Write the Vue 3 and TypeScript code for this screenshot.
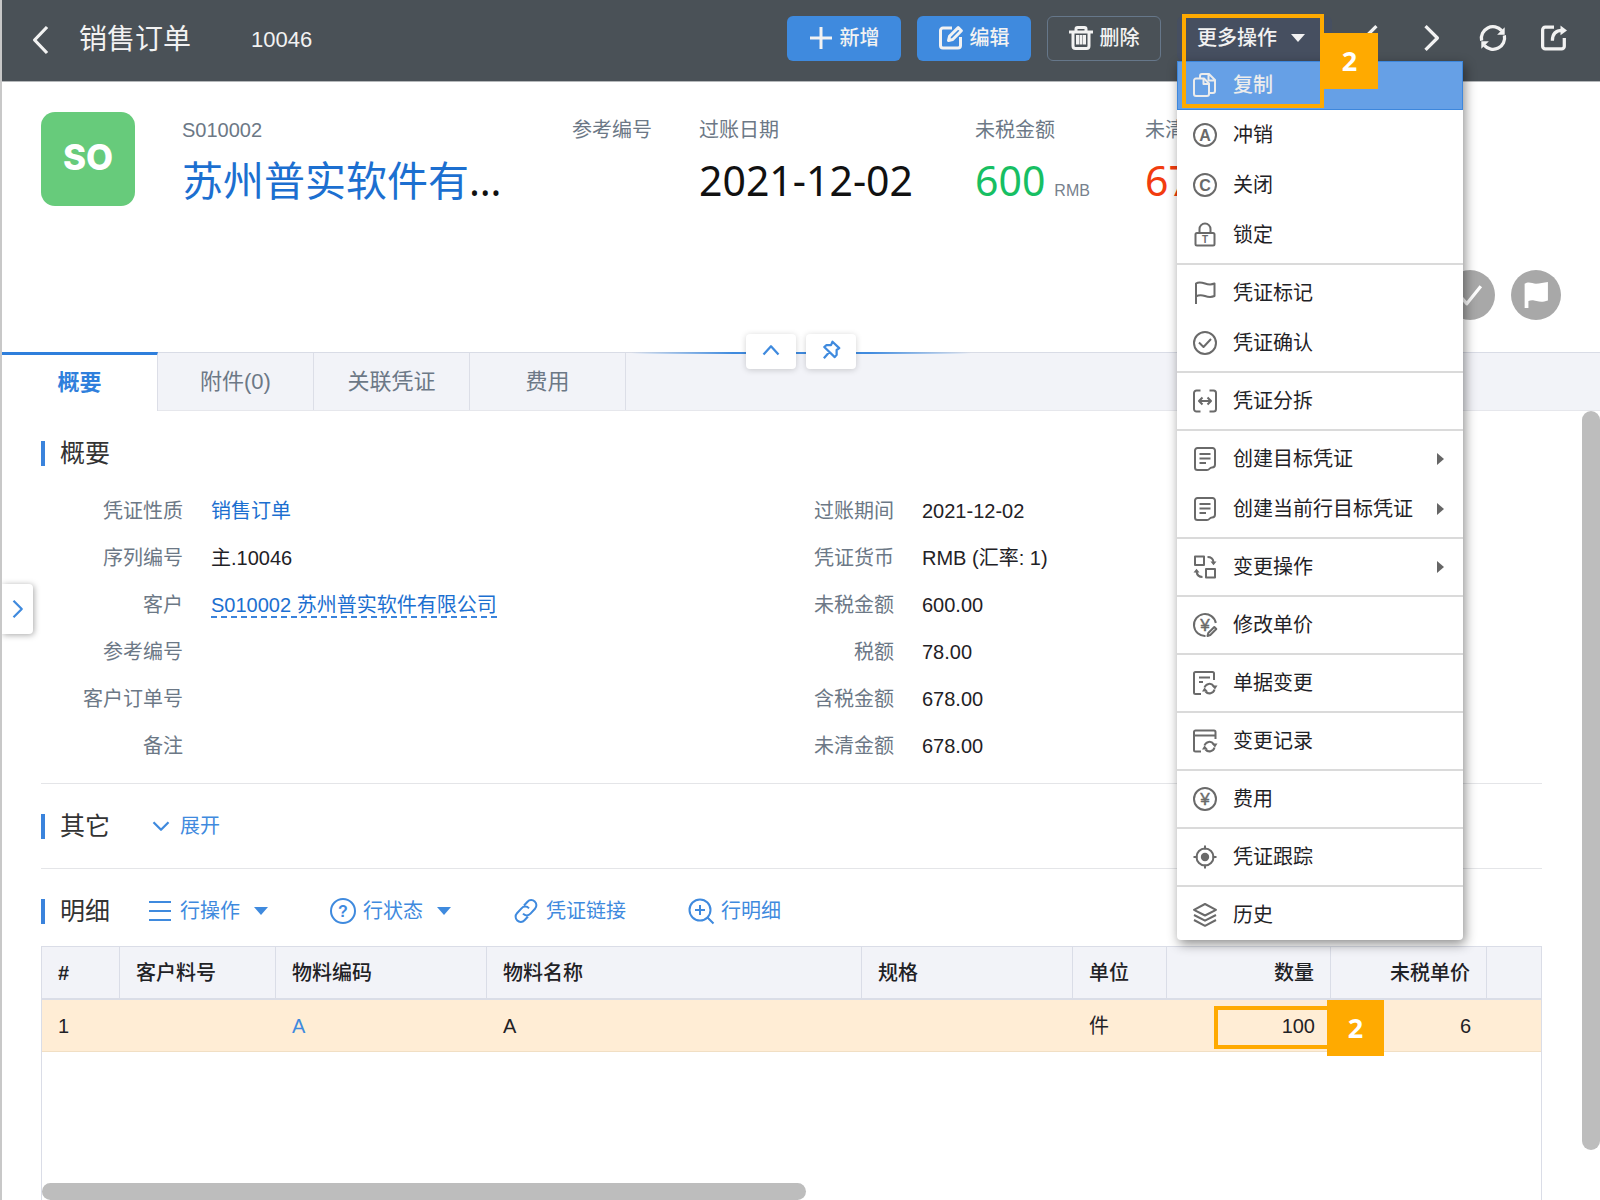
<script setup lang="ts">
import { ref } from 'vue'

interface MenuItem {
  icon: string
  label: string
  submenu?: boolean
}

interface Field {
  label: string
  value: string
  kind?: 'link' | 'dashed'
}

interface Column {
  title: string
  width: number
  value: string
  numeric?: boolean
  link?: boolean
  marked?: boolean
}

const refreshArcs =
  '<path d="M11.500 16.500a5.200 5.200 0 0 1 9.200-1.500M21.500 18.500a5.200 5.200 0 0 1-9 2"/><path fill="currentColor" stroke="none" d="M18.500 14.500h6l-2.500 4zM9 20.500h6l-3.500-4z"/>'

const icons: Record<string, string> = {
  back: '<path d="M18.500 0 7 12l11.500 12"/>',
  prev: '<path d="M17 1 6 12l11 11"/>',
  next: '<path d="m6 1 11 11L6 23"/>',
  plus: '<path d="M12 1v22M1 12h22"/>',
  edit: '<path d="M13 2H4a2.500 2.500 0 0 0-2.500 2.500v15A2.500 2.500 0 0 0 4 22h15a2.500 2.500 0 0 0 2.500-2.500V11"/><path d="m9.500 14.500 1-4.200 8.700-8.700 3.200 3.200-8.700 8.700z"/>',
  trash: '<path d="M0 6h24M7 5.500V3a1.500 1.500 0 0 1 1.500-1.500h7A1.500 1.500 0 0 1 17 3v2.500M4 6v14a2.500 2.500 0 0 0 2.500 2.500h11A2.500 2.500 0 0 0 20 20V6M8.500 9V18.500M12 9V18.500M15.500 9V18.500"/>',
  refresh: '<path d="M1.500 14.500A10.700 10.700 0 0 1 20 5.200M22.500 9.500A10.700 10.700 0 0 1 4 18.800"/><path fill="currentColor" stroke="none" d="M22.800 2v7h-7zM1.200 22v-7h7z"/>',
  share: '<path d="M12 2H4a2.500 2.500 0 0 0-2.500 2.500v15A2.500 2.500 0 0 0 4 22h15a2.500 2.500 0 0 0 2.500-2.500V12M10.500 14.500c0-6 3-9.500 9-9.500"/><path fill="currentColor" stroke="none" d="M18 .5 24 5l-6 4.500z"/>',
  copy: '<path d="M3 5.500h8l5 5V21a2 2 0 0 1-2 2H3a2 2 0 0 1-2-2V7.500a2 2 0 0 1 2-2z"/><path d="M10.500 6v5H16M7 5V3a2 2 0 0 1 2-2h7l6 6v11a2 2 0 0 1-2 2h-3.500M15.500 1.500V7.500H22"/>',
  circleA: '<circle cx="12" cy="12" r="11"/><text x="12" y="17.500" text-anchor="middle" font-size="16" font-weight="700" fill="currentColor" stroke="none">A</text>',
  circleC: '<circle cx="12" cy="12" r="11"/><text x="12" y="17.500" text-anchor="middle" font-size="16" font-weight="700" fill="currentColor" stroke="none">C</text>',
  lock: '<rect x="2.500" y="10" width="19" height="12.500" rx="1.500"/><path d="M6.500 10V6a5.500 5.500 0 0 1 11 0v4"/><text x="12" y="20" text-anchor="middle" font-size="10" font-weight="700" fill="currentColor" stroke="none">T</text>',
  flag: '<path d="M3 23V2.500c3-2 6-1 9 0s6 1.500 9.500 0v12.500c-3.500 1.500-6.500 1-9.500 0s-6-1.500-9 .5"/>',
  check: '<circle cx="12" cy="12" r="11"/><path d="m6 11.500 4.500 4.500 7.500-8"/>',
  split: '<path d="M7.500 1.500H3.500A2.500 2.500 0 0 0 1 4v16a2.500 2.500 0 0 0 2.500 2.500h4M16.500 1.500h4A2.500 2.500 0 0 1 23 4v16a2.500 2.500 0 0 1-2.500 2.500h-4M6 12h12M9.500 8.500 6 12l3.500 3.500M14.500 8.500 18 12l-3.500 3.500"/>',
  doc: '<path d="M4.500 1h15a2.500 2.500 0 0 1 2.500 2.500v14a3 3 0 0 1-3 3c-3 0-2 2.500-5 2.500H4.500A2.500 2.500 0 0 1 2 20.500v-17A2.500 2.500 0 0 1 4.500 1zM6.500 7h11M6.500 11.500h11M6.500 16h6.500"/>',
  swap: '<rect x="2" y="1.500" width="9" height="8.500"/><rect x="13" y="14" width="9" height="8.500"/><path d="M14.500 2c3 0 5.500 1.500 6 5M9.500 22c-3.500 0-5.500-2-6-5.500"/><path fill="currentColor" stroke="none" d="M17.500 6.500h6l-3 3.800zM.5 17.500h6l-3-3.800z"/>',
  price: '<path d="M12.500 23A11 11 0 1 1 22.800 10"/><text x="12" y="17.500" text-anchor="middle" font-size="17" fill="currentColor" stroke="currentColor" stroke-width=".5">¥</text><path d="m14.500 23 .8-3 6-6 2 2-6 6z"/>',
  docChange: '<path d="M8 23H2.500A1.500 1.500 0 0 1 1 21.500v-19A1.500 1.500 0 0 1 2.500 1h17A1.500 1.500 0 0 1 21 2.500V9M6 6.500h11M6 11h4"/>' + refreshArcs,
  history: '<path d="M8 22.500H2.500A1.500 1.500 0 0 1 1 21V3a1.500 1.500 0 0 1 1.500-1.500h18.500A1.500 1.500 0 0 1 22.500 3v7M1 6.500h21.500"/>' + refreshArcs,
  yen: '<circle cx="12" cy="12" r="11"/><text x="12" y="18" text-anchor="middle" font-size="17" fill="currentColor" stroke="currentColor" stroke-width=".5">¥</text>',
  target: '<circle cx="12" cy="12" r="8.500"/><circle cx="12" cy="12" r="4.200" fill="currentColor" stroke="none"/><path d="M12 .5v4M12 19.500v4M.5 12h4M19.500 12h4"/>',
  layers: '<path d="m12 1 11 5.800-11 5.700L1 6.800zM1 12l11 5.700L23 12M1 17l11 5.800L23 17"/>',
  up: '<path d="m2 18 10-11 10 11"/>',
  down: '<path d="m2 7 10 10L22 7"/>',
  pin: '<path d="m14 1 9 8.500-3.500 2.500v6.500l-2.500 3L3 8l3-2.500h6zM9.500 15l-7 8"/>',
  list: '<path d="M1 3h22M1 12h22M1 21h22"/>',
  help: '<circle cx="12" cy="12" r="12"/><text x="12" y="17.500" text-anchor="middle" font-size="16" font-weight="700" fill="currentColor" stroke="none">?</text>',
  link: '<path d="m10 6.500 3.500-3.800a5 5 0 0 1 7.500 7l-4.500 5a5 5 0 0 1-7.500 0M14 17.500l-3.500 3.800a5 5 0 0 1-7.500-7l4.500-5a5 5 0 0 1 7.500 0"/>',
  zoomIn: '<circle cx="11" cy="11" r="10.500"/><path d="m18.500 18.500 6 6M11 6v10M6 11h10"/>',
  solidFlag: '<path fill="currentColor" d="M1.500 1.500c4-2.500 7 0 10.500 0s7-1 11-1.500v17c-4.500 1.500-7 1.500-10.500.5s-5-1-7.500 0V24h-3.500z" stroke="none"/>',
  solidCheck: '<path d="m2 12 7 8L22 4"/>',
}

const menuGroups: MenuItem[][] = [
  [
    { icon: 'copy', label: '复制' },
    { icon: 'circleA', label: '冲销' },
    { icon: 'circleC', label: '关闭' },
    { icon: 'lock', label: '锁定' },
  ],
  [
    { icon: 'flag', label: '凭证标记' },
    { icon: 'check', label: '凭证确认' },
  ],
  [{ icon: 'split', label: '凭证分拆' }],
  [
    { icon: 'doc', label: '创建目标凭证', submenu: true },
    { icon: 'doc', label: '创建当前行目标凭证', submenu: true },
  ],
  [{ icon: 'swap', label: '变更操作', submenu: true }],
  [{ icon: 'price', label: '修改单价' }],
  [{ icon: 'docChange', label: '单据变更' }],
  [{ icon: 'history', label: '变更记录' }],
  [{ icon: 'yen', label: '费用' }],
  [{ icon: 'target', label: '凭证跟踪' }],
  [{ icon: 'layers', label: '历史' }],
]

const tabs = ['概要', '附件(0)', '关联凭证', '费用']
const activeTab = ref('概要')
const highlighted = ref('复制')

const fieldColumns: Field[][] = [
  [
    { label: '凭证性质', value: '销售订单', kind: 'link' },
    { label: '序列编号', value: '主.10046' },
    { label: '客户', value: 'S010002 苏州普实软件有限公司', kind: 'dashed' },
    { label: '参考编号', value: '' },
    { label: '客户订单号', value: '' },
    { label: '备注', value: '' },
  ],
  [
    { label: '过账期间', value: '2021-12-02' },
    { label: '凭证货币', value: 'RMB (汇率: 1)' },
    { label: '未税金额', value: '600.00' },
    { label: '税额', value: '78.00' },
    { label: '含税金额', value: '678.00' },
    { label: '未清金额', value: '678.00' },
  ],
]

const rowTools = [
  { icon: 'list', label: '行操作', caret: true },
  { icon: 'help', label: '行状态', caret: true },
  { icon: 'link', label: '凭证链接', caret: false },
  { icon: 'zoomIn', label: '行明细', caret: false },
]

const columns: Column[] = [
  { title: '#', width: 78, value: '1' },
  { title: '客户料号', width: 156, value: '' },
  { title: '物料编码', width: 211, value: 'A', link: true },
  { title: '物料名称', width: 375, value: 'A' },
  { title: '规格', width: 211, value: '' },
  { title: '单位', width: 94, value: '件' },
  { title: '数量', width: 164, value: '100', numeric: true, marked: true },
  { title: '未税单价', width: 156, value: '6', numeric: true },
]
</script>

<template>
  <div class="page">
    <header class="topbar">
      <button class="icon-btn back" type="button" aria-label="返回">
        <svg viewBox="0 0 24 24" v-html="icons.back" />
      </button>
      <h1>销售订单</h1>
      <span class="doc-no">10046</span>
      <div class="actions">
        <button class="btn primary" type="button"><svg viewBox="0 0 24 24" v-html="icons.plus" />新增</button>
        <button class="btn primary" type="button"><svg viewBox="0 0 24 24" v-html="icons.edit" />编辑</button>
        <button class="btn outline" type="button"><svg viewBox="0 0 24 24" v-html="icons.trash" />删除</button>
        <div class="more">
          <button class="more-btn" type="button" aria-haspopup="menu">更多操作<i class="caret" /></button>
          <div class="menu" role="menu">
            <div v-for="(group, g) in menuGroups" :key="g" class="menu-group">
              <button
                v-for="item in group"
                :key="item.label"
                type="button"
                role="menuitem"
                class="menu-item"
                :class="{ current: item.label === highlighted }"
              >
                <svg viewBox="0 0 24 24" v-html="icons[item.icon]" />
                <span>{{ item.label }}</span>
                <i v-if="item.submenu" class="arrow" />
              </button>
            </div>
          </div>
          <div class="frame menu-frame" />
          <div class="badge menu-badge">2</div>
        </div>
      </div>
      <nav class="pager">
        <button class="icon-btn" type="button" aria-label="上一条"><svg viewBox="0 0 24 24" v-html="icons.prev" /></button>
        <button class="icon-btn" type="button" aria-label="下一条"><svg viewBox="0 0 24 24" v-html="icons.next" /></button>
        <button class="icon-btn" type="button" aria-label="刷新"><svg viewBox="0 0 24 24" v-html="icons.refresh" /></button>
        <button class="icon-btn" type="button" aria-label="打开"><svg viewBox="0 0 24 24" v-html="icons.share" /></button>
      </nav>
    </header>

    <section class="summary">
      <div class="facts">
        <div class="logo">SO</div>
        <div class="fact customer">
          <span class="cap">S010002</span>
          <div class="big"><a href="#">苏州普实软件有限公司</a></div>
        </div>
        <div class="fact"><span class="cap">参考编号</span></div>
        <div class="fact date">
          <span class="cap">过账日期</span>
          <div class="big">2021-12-02</div>
        </div>
        <div class="fact amount">
          <span class="cap">未税金额</span>
          <div class="big green">600<small>RMB</small></div>
        </div>
        <div class="fact amount">
          <span class="cap">未清金额</span>
          <div class="big red">678<small>RMB</small></div>
        </div>
      </div>
      <div class="states">
        <span class="state"><svg viewBox="0 0 24 24" v-html="icons.solidCheck" /></span>
        <span class="state"><svg viewBox="0 0 24 24" v-html="icons.solidFlag" /></span>
      </div>
    </section>

    <div class="tabbar" role="tablist">
      <button
        v-for="tab in tabs"
        :key="tab"
        class="tab"
        :class="{ active: tab === activeTab }"
        type="button"
        role="tab"
        @click="activeTab = tab"
      >
        {{ tab }}
      </button>
      <div class="fold">
        <button type="button" aria-label="收起"><svg viewBox="0 0 24 24" v-html="icons.up" /></button>
        <button type="button" aria-label="固定"><svg viewBox="0 0 24 24" v-html="icons.pin" /></button>
      </div>
    </div>

    <main class="content">
      <div class="body">
        <section class="overview">
          <div class="head"><h2>概要</h2></div>
          <div class="fields">
            <dl v-for="(column, c) in fieldColumns" :key="c">
              <div v-for="field in column" :key="field.label" class="field">
                <dt>{{ field.label }}</dt>
                <dd>
                  <a v-if="field.kind" href="#" :class="field.kind">{{ field.value }}</a>
                  <template v-else>{{ field.value }}</template>
                </dd>
              </div>
            </dl>
          </div>
        </section>

        <section class="other">
          <div class="head">
            <h2>其它</h2>
            <button class="tool expand" type="button"><svg viewBox="0 0 24 24" v-html="icons.down" />展开</button>
          </div>
        </section>

        <section class="detail">
          <div class="head">
            <h2>明细</h2>
            <div class="tools">
              <button v-for="tool in rowTools" :key="tool.label" class="tool" type="button">
                <svg viewBox="0 0 24 24" v-html="icons[tool.icon]" />{{ tool.label }}<i v-if="tool.caret" class="caret" />
              </button>
            </div>
          </div>
          <div class="grid">
            <table>
              <colgroup>
                <col v-for="col in columns" :key="col.title" :style="{ width: col.width + 'px' }" />
                <col />
              </colgroup>
              <thead>
                <tr>
                  <th v-for="col in columns" :key="col.title" :class="{ num: col.numeric }">{{ col.title }}</th>
                  <th />
                </tr>
              </thead>
              <tbody>
                <tr>
                  <td v-for="col in columns" :key="col.title" :class="{ num: col.numeric, marked: col.marked }">
                    <a v-if="col.link" href="#">{{ col.value }}</a>
                    <template v-else>{{ col.value }}</template>
                    <template v-if="col.marked">
                      <div class="frame cell-frame" />
                      <div class="badge cell-badge">2</div>
                    </template>
                  </td>
                  <td />
                </tr>
              </tbody>
            </table>
            <div class="h-scroll" />
          </div>
        </section>
      </div>
      <div class="v-scroll" />
      <button class="side-handle" type="button" aria-label="展开侧栏">
        <svg viewBox="0 0 24 24" v-html="icons.next" />
      </button>
    </main>
  </div>
</template>

<style>
body {
  margin: 0;
}
</style>

<style scoped>
* {
  box-sizing: border-box;
}

.page {
  display: flex;
  flex-direction: column;
  height: 100vh;
  overflow: hidden;
  border-left: 2px solid #c8c8c8;
  background: #fff;
  color: #1f2226;
  font-family: 'Liberation Sans', 'Noto Sans CJK SC', sans-serif;
  font-size: 20px;
  line-height: 30px;
}

button {
  margin: 0;
  padding: 0;
  border: 0;
  background: none;
  color: inherit;
  font: inherit;
}

svg {
  display: block;
  flex: none;
  overflow: visible;
  fill: none;
  stroke: currentColor;
  stroke-width: 2;
  stroke-linejoin: round;
}

a {
  color: #1c6fd0;
  text-decoration: none;
}

.caret {
  border: 7px solid transparent;
  border-top: 8px solid currentColor;
  border-bottom: 0;
}

/* top bar */
.topbar {
  display: flex;
  flex: none;
  align-items: center;
  height: 82px;
  padding: 0 33px 5px 25px;
  border-bottom: 1px solid #b5b8ba;
  background: #4a5157;
  color: #f2f2f2;
}

.icon-btn svg {
  width: 26px;
  height: 26px;
  stroke-width: 3;
}

.back {
  padding-top: 4px;
}

h1 {
  margin: 0 0 0 26px;
  padding-top: 3px;
  font-size: 28px;
  font-weight: 400;
  line-height: 40px;
}

.doc-no {
  margin-left: 60px;
  padding-top: 3px;
  font-size: 22px;
}

.actions {
  display: flex;
  gap: 16px;
  margin-left: auto;
}

.btn {
  display: flex;
  align-items: center;
  justify-content: center;
  gap: 7px;
  width: 114px;
  height: 45px;
  border-radius: 6px;
  font-weight: 500;
}

.btn svg {
  width: 24px;
  height: 24px;
  stroke-width: 3;
}

.primary {
  background: #3f8ade;
}

.outline {
  border: 1px solid #66778a;
}

.more {
  position: relative;
  z-index: 5;
  width: 155px;
}

.more-btn {
  display: flex;
  align-items: center;
  gap: 14px;
  width: 100%;
  height: 45px;
  padding-left: 20px;
  border-radius: 6px;
  background: #464f60;
  font-weight: 500;
}

.pager {
  display: flex;
  gap: 35px;
  margin-left: 26px;
}

/* drop-down menu */
.menu {
  position: absolute;
  top: 45px;
  left: 0;
  width: 286px;
  border-radius: 0 0 4px 4px;
  background: #fff;
  box-shadow: 2px 4px 12px rgba(0, 0, 0, 0.45);
  color: #1f2226;
}

.menu-group + .menu-group {
  margin-top: 3px;
  padding-top: 3px;
  border-top: 2px solid #dadada;
}

.menu-item {
  display: flex;
  align-items: center;
  gap: 15px;
  width: 100%;
  height: 50px;
  padding: 0 19px 0 15px;
  text-align: left;
}

.menu-item svg {
  width: 26px;
  height: 26px;
  padding: 1px;
  color: #6a6a6a;
}

.menu-item.current {
  height: 49px;
  border: 1px solid #3d87dd;
  padding-left: 14px;
  background: #66a0e6;
  color: #ececec;
  font-weight: 500;
}

.menu-item.current svg {
  color: #ececec;
}

.arrow {
  margin-left: auto;
  border: 6px solid transparent;
  border-right: 0;
  border-left: 7px solid #666;
}

/* step markers */
.frame {
  position: absolute;
  border: 4px solid #ffaa00;
}

.badge {
  position: absolute;
  display: flex;
  align-items: center;
  justify-content: center;
  width: 57px;
  height: 56px;
  background: #ffaa00;
  color: #fff;
  font-family: 'Noto Sans', sans-serif;
  font-size: 27px;
  font-weight: 700;
}

.menu-frame {
  top: -2px;
  left: 5px;
  width: 142px;
  height: 94px;
}

.menu-badge {
  top: 17px;
  left: 144px;
}

.cell-frame {
  top: 6px;
  left: 47px;
  width: 117px;
  height: 43px;
}

.cell-badge {
  top: 0;
  left: 160px;
}

/* summary */
.summary {
  display: flex;
  flex: none;
  flex-direction: column;
  justify-content: space-between;
  height: 270px;
  padding: 30px 39px 32px;
}

.facts {
  display: flex;
  gap: 47px;
}

.logo {
  flex: none;
  width: 94px;
  height: 94px;
  border-radius: 14px;
  background: #67cb7b;
  color: #fff;
  font-family: Inter, sans-serif;
  font-size: 35px;
  font-weight: 800;
  line-height: 91px;
  text-align: center;
}

.fact {
  flex: none;
  padding-top: 3px;
}

.customer {
  width: 343px;
}

.customer .big {
  max-width: 330px;
  overflow: hidden;
  text-overflow: ellipsis;
}

.date {
  width: 229px;
}

.amount {
  width: 123px;
}

.cap {
  display: block;
  color: #6c7886;
}

.big {
  margin-top: 5px;
  color: #111;
  font-family: 'Noto Sans', 'Noto Sans CJK SC', sans-serif;
  font-size: 41px;
  line-height: 60px;
  white-space: nowrap;
}

.big small {
  margin-left: 9px;
  color: #77818d;
  font-family: 'Liberation Sans', sans-serif;
  font-size: 16px;
}

.green {
  color: #17bf63;
}

.red {
  color: #f23c0f;
}

.states {
  display: flex;
  justify-content: flex-end;
  gap: 16px;
}

.state {
  display: grid;
  place-items: center;
  width: 50px;
  height: 50px;
  border-radius: 50%;
  background: #a8a8a8;
  color: #fff;
}

.state svg {
  width: 26px;
  height: 26px;
  stroke-width: 3;
}

/* tabs */
.tabbar {
  position: relative;
  display: flex;
  flex: none;
  height: 59px;
  border-top: 1px solid #d9dce6;
  border-bottom: 1px solid #e6e7ec;
  background: #f2f3f8;
}

.tab {
  width: 156px;
  border-right: 1px solid #dcdee7;
  color: #6c7886;
  font-size: 22px;
}

.tab.active {
  margin: -1px 0;
  border-top: 3px solid #2f7fdc;
  background: #fff;
  color: #2f7fdc;
  font-weight: 700;
}

.fold {
  position: absolute;
  top: -1px;
  left: 50%;
  display: flex;
  justify-content: center;
  gap: 10px;
  width: 340px;
  height: 2px;
  transform: translateX(-50%);
  background: linear-gradient(90deg, transparent, #3f8ade 30%, #3f8ade 70%, transparent);
}

.fold button {
  display: grid;
  place-items: center;
  width: 50px;
  height: 35px;
  margin-top: -18px;
  padding-bottom: 3px;
  border-radius: 4px;
  background: #fff;
  box-shadow: 0 1px 6px rgba(0, 0, 0, 0.18);
  color: #3f8ade;
}

.fold svg {
  width: 18px;
  height: 18px;
  stroke-width: 3;
}

/* content */
.content {
  position: relative;
  display: flex;
  flex: 1;
  min-height: 0;
}

.body {
  display: flex;
  flex: 1;
  flex-direction: column;
  min-width: 0;
  padding: 0 40px 0 39px;
}

.v-scroll {
  flex: none;
  width: 18px;
  height: 739px;
  border-radius: 9px;
  background: #bdbdbd;
}

.side-handle {
  position: absolute;
  top: 173px;
  left: 0;
  display: grid;
  place-items: center;
  width: 31px;
  height: 50px;
  border-radius: 0 4px 4px 0;
  background: #fff;
  box-shadow: 1px 1px 6px rgba(0, 0, 0, 0.35);
  color: #3f8ade;
}

.side-handle svg {
  width: 18px;
  height: 18px;
  stroke-width: 3;
}

.head {
  display: flex;
  align-items: center;
  height: 40px;
}

h2 {
  display: flex;
  align-items: center;
  gap: 15px;
  margin: 0;
  color: #333;
  font-size: 25px;
  font-weight: 400;
  line-height: 40px;
}

h2::before {
  width: 4px;
  height: 25px;
  background: #3a83dc;
  content: '';
}

.overview {
  padding: 22px 0 14px;
  border-bottom: 1px solid #e4e5e8;
}

.fields {
  display: grid;
  grid-template-columns: 9fr 10fr;
  margin-top: 14px;
}

dl {
  margin: 0;
}

.field {
  display: flex;
  align-items: center;
  gap: 28px;
  height: 47px;
}

dt {
  width: 142px;
  color: #6c7886;
  text-align: right;
}

dd {
  margin: 0;
}

.dashed {
  border-bottom: 2px dashed #3a83dc;
}

.other {
  padding: 22px 0;
  border-bottom: 1px solid #e4e5e8;
}

.tool {
  display: flex;
  align-items: center;
  gap: 8px;
  color: #3f8ade;
}

.tool svg {
  width: 24px;
  height: 24px;
}

.tool .caret {
  margin-left: 6px;
}

.expand {
  gap: 10px;
  margin-left: 42px;
}

.expand svg {
  width: 18px;
  height: 18px;
  stroke-width: 3;
}

.tools {
  display: flex;
  gap: 63px;
  margin-left: 38px;
}

.detail {
  display: flex;
  flex: 1;
  flex-direction: column;
  padding-top: 22px;
}

.grid {
  display: flex;
  flex: 1;
  flex-direction: column;
  justify-content: space-between;
  margin-top: 15px;
  border: 1px solid #dadde7;
  border-bottom: 0;
}

table {
  width: 100%;
  border-collapse: separate;
  border-spacing: 0;
  table-layout: fixed;
}

th,
td {
  height: 53px;
  padding: 0 16px;
  text-align: left;
}

th {
  border-right: 1px solid #dadde7;
  border-bottom: 2px solid #dadde7;
  background: #f2f3f8;
  font-weight: 500;
}

th:first-child {
  font-weight: 700;
}

th:last-child {
  border-right: 0;
}

td {
  height: 52px;
  border-bottom: 1px solid #f1dfc4;
  background: #ffedd5;
}

td a {
  color: #3f8ade;
}

.num {
  text-align: right;
}

.marked {
  position: relative;
}

.h-scroll {
  width: 51%;
  height: 17px;
  border-radius: 9px;
  background: #bdbdbd;
}
</style>
